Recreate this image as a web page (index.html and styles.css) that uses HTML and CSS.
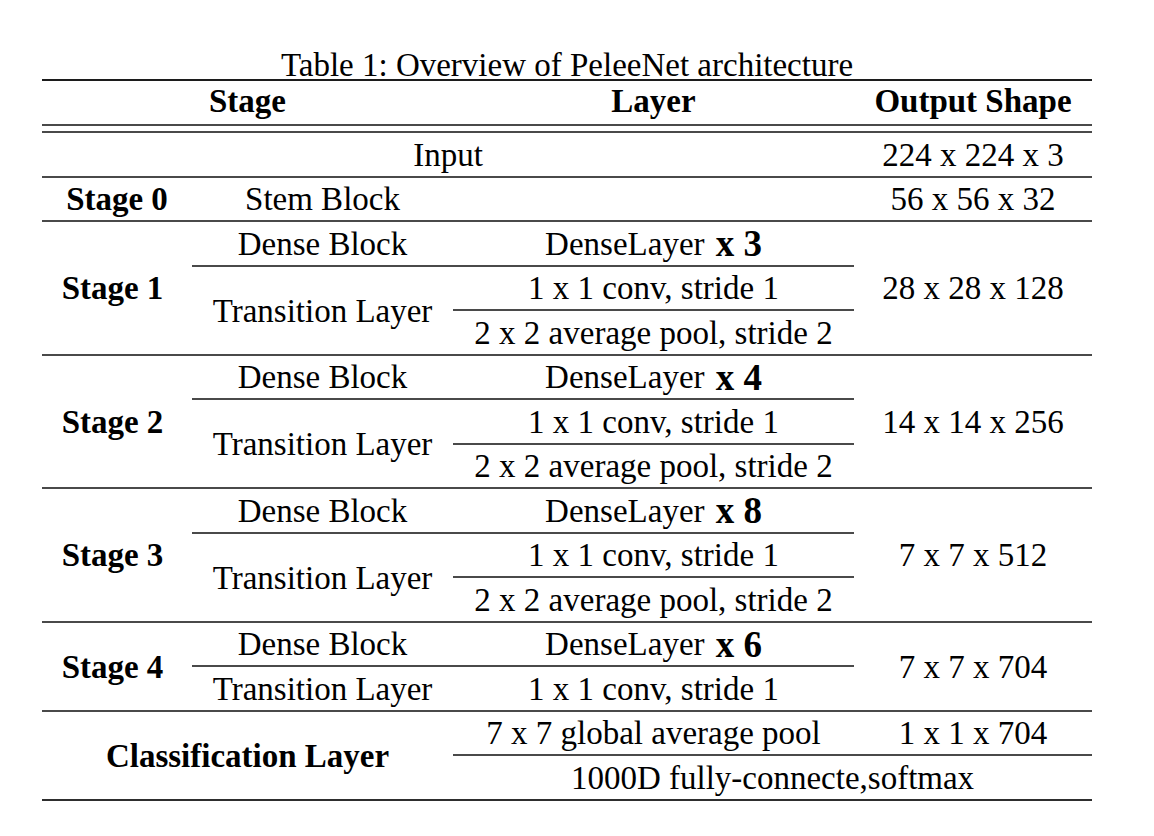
FILE: index.html
```html
<!DOCTYPE html>
<html lang="en">
<head>
<meta charset="utf-8">
<title>Table 1: Overview of PeleeNet architecture</title>
<link rel="stylesheet" href="styles.css">
</head>
<body>
<div class="page">
  <div class="table">
    <div class="caption">Table 1: Overview of PeleeNet architecture</div>
    <div class="head grid">
      <div class="cell c2">Stage</div>
      <div class="cell">Layer</div>
      <div class="cell">Output Shape</div>
    </div>
    <div class="body grid">
      <div class="cell c3">Input</div>
      <div class="cell">224 x 224 x 3</div>

      <div class="cell stage">Stage 0</div>
      <div class="cell">Stem Block</div>
      <div class="cell"></div>
      <div class="cell">56 x 56 x 32</div>

      <div class="cell stage multi r3">Stage 1</div>
      <div class="cell">Dense Block</div>
      <div class="cell">DenseLayer<b class="times">x 3</b></div>
      <div class="cell r3">28 x 28 x 128</div>
      <div class="cell r2">Transition Layer</div>
      <div class="cell">1 x 1 conv, stride 1</div>
      <div class="cell">2 x 2 average pool, stride 2</div>

      <div class="cell stage multi r3">Stage 2</div>
      <div class="cell">Dense Block</div>
      <div class="cell">DenseLayer<b class="times">x 4</b></div>
      <div class="cell r3">14 x 14 x 256</div>
      <div class="cell r2">Transition Layer</div>
      <div class="cell">1 x 1 conv, stride 1</div>
      <div class="cell">2 x 2 average pool, stride 2</div>

      <div class="cell stage multi r3">Stage 3</div>
      <div class="cell">Dense Block</div>
      <div class="cell">DenseLayer<b class="times">x 8</b></div>
      <div class="cell r3">7 x 7 x 512</div>
      <div class="cell r2">Transition Layer</div>
      <div class="cell">1 x 1 conv, stride 1</div>
      <div class="cell">2 x 2 average pool, stride 2</div>

      <div class="cell stage multi r2">Stage 4</div>
      <div class="cell">Dense Block</div>
      <div class="cell">DenseLayer<b class="times">x 6</b></div>
      <div class="cell r2">7 x 7 x 704</div>
      <div class="cell">Transition Layer</div>
      <div class="cell">1 x 1 conv, stride 1</div>

      <div class="cell stage c2 r2 last">Classification Layer</div>
      <div class="cell">7 x 7 global average pool</div>
      <div class="cell">1 x 1 x 704</div>
      <div class="cell c2 last">1000D fully-connecte,softmax</div>
    </div>
  </div>
</div>
</body>
</html>
```
FILE: styles.css
```css
html, body {
  margin: 0;
  padding: 0;
  background: #ffffff;
}

body {
  font-family: "Liberation Serif", "Times New Roman", serif;
  font-size: 33px;
  color: #000000;
}

.page {
  padding: 51px 0 0 42px;
}

.table {
  width: 1050px;
}

.caption {
  text-align: center;
  line-height: 28px;
  height: 28px;
  white-space: nowrap;
}

.grid {
  display: grid;
  grid-template-columns: 150px 261px 401px 238px;
}

.head {
  box-sizing: border-box;
  height: 47px;
  border-top: 2px solid #1c1c1c;
  border-bottom: 2px solid #4a4a4a;
  font-weight: bold;
}

.body {
  margin-top: 5px;
  border-top: 2px solid #4a4a4a;
  grid-template-rows: repeat(15, 44.53px);
}

.cell {
  box-sizing: border-box;
  display: flex;
  align-items: center;
  justify-content: center;
  line-height: 36px;
  padding-top: 1px;
  white-space: nowrap;
}

.head .cell {
  padding-top: 0;
  padding-bottom: 3px;
}

.body .cell {
  border-bottom: 2px solid #4a4a4a;
}

.body .cell.last {
  border-bottom-color: #2e2e2e;
}

.stage {
  font-weight: bold;
}

.multi {
  padding-right: 9px;
}

.times {
  font-size: 37px;
  line-height: 1;
  margin-left: 0.3em;
  font-weight: bold;
}

.c2 { grid-column: span 2; }
.c3 { grid-column: span 3; }
.r2 { grid-row: span 2; }
.r3 { grid-row: span 3; }
```
